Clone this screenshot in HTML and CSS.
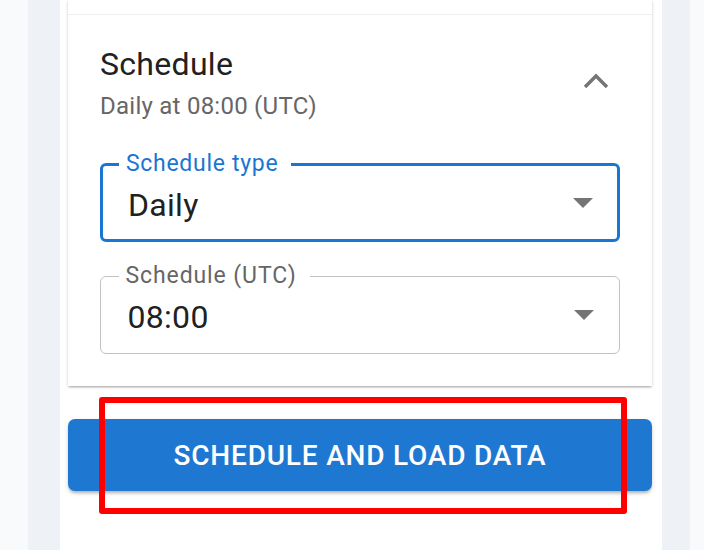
FILE: index.html
```html
<!DOCTYPE html>
<html>
<head>
<meta charset="utf-8">
<link rel="stylesheet" href="styles.css">
</head>
<body>
<div class="page">
  <div class="rail">
    <div class="panel">
      <div class="card">
        <div class="prev"></div>
        <div class="section">
          <div class="head">
            <div class="titles">
              <div class="title">Schedule</div>
              <div class="subtitle">Daily at 08:00 (UTC)</div>
            </div>
            <svg class="chev" width="28" height="18" viewBox="0 0 28 18"><path d="M3 15 L14 4 L25 15" fill="none" stroke="#757575" stroke-width="3.4"/></svg>
          </div>
          <div class="field focused">
            <span class="label">Schedule type</span>
            <span class="value">Daily</span>
            <svg class="caret" width="20" height="10" viewBox="0 0 20 10"><path d="M0 0 H20 L10 10 Z" fill="#757575"/></svg>
          </div>
          <div class="field">
            <span class="label">Schedule (UTC)</span>
            <span class="value">08:00</span>
            <svg class="caret" width="20" height="10" viewBox="0 0 20 10"><path d="M0 0 H20 L10 10 Z" fill="#757575"/></svg>
          </div>
        </div>
      </div>
      <div class="actions">
        <button class="primary">SCHEDULE AND LOAD DATA</button>
        <div class="highlight"></div>
      </div>
    </div>
  </div>
</div>
</body>
</html>
```
FILE: styles.css
```css
html, body {
  margin: 0;
  padding: 0;
  height: 100%;
}
body {
  background: #f8fafc;
  font-family: Roboto, "Liberation Sans", sans-serif;
  overflow: hidden;
}
.page {
  display: flex;
  padding-left: 28px;
  height: 550px;
}
.rail {
  width: 662px;
  background: #eef2f7;
  padding: 0 28px 0 32px;
  box-sizing: border-box;
}
.panel {
  background: #fff;
  height: 100%;
  padding: 0 10px 0 8px;
}
.card {
  background: #fff;
  box-shadow: 0 2px 2px -1px rgba(0,0,0,0.25), 0 1px 3px rgba(0,0,0,0.18);
}
.prev {
  height: 14px;
  border-bottom: 1px solid #eeeeee;
}
.section {
  padding: 30px 32px 32px 32px;
}
.head {
  display: flex;
  align-items: center;
  justify-content: space-between;
  margin-bottom: 42px;
}
.title {
  font-size: 32px;
  line-height: 38px;
  letter-spacing: 0.3px;
  color: #212121;
}
.subtitle {
  font-size: 24px;
  line-height: 30px;
  letter-spacing: 0.25px;
  color: #666;
  margin-top: 8px;
}
.chev {
  margin-right: 10px;
  margin-top: -4px;
}
.field {
  position: relative;
  height: 78px;
  border: 1.5px solid #c2c2c2;
  border-radius: 6px;
  box-sizing: border-box;
  display: flex;
  align-items: center;
  padding: 0 25.5px 0 26.5px;
  margin-bottom: 35px;
}
.field:last-child {
  margin-bottom: 0;
}
.field.focused {
  height: 79px;
  border: 3px solid #1976d2;
  padding-left: 25px;
  padding-right: 24px;
  margin-bottom: 34px;
}
.label {
  position: absolute;
  top: -14px;
  left: 17.5px;
  background: #fff;
  padding: 0 13px 0 7px;
  font-size: 23px;
  line-height: 26px;
  letter-spacing: 0.9px;
  color: #666;
}
.focused .label {
  color: #1976d2;
  left: 16px;
  top: -15.5px;
  letter-spacing: 0.7px;
}
.value {
  flex: 1;
  font-size: 32px;
  letter-spacing: 0.3px;
  color: #212121;
  padding-top: 4px;
}
.caret {
  display: block;
}
.actions {
  position: relative;
  padding-top: 33px;
}
.primary {
  display: block;
  width: 100%;
  height: 72px;
  border: none;
  border-radius: 7px;
  background: #1e78d2;
  color: #fff;
  font-family: Roboto, "Liberation Sans", sans-serif;
  font-size: 28px;
  font-weight: 500;
  letter-spacing: 0.8px;
  box-shadow: 0 3px 3px -1px rgba(0,0,0,0.2), 0 2px 5px rgba(0,0,0,0.14);
}
.highlight {
  position: absolute;
  left: 31px;
  top: 11px;
  width: 528px;
  height: 117px;
  border: 6px solid #ff0000;
  border-radius: 3px;
  box-sizing: border-box;
}
```
